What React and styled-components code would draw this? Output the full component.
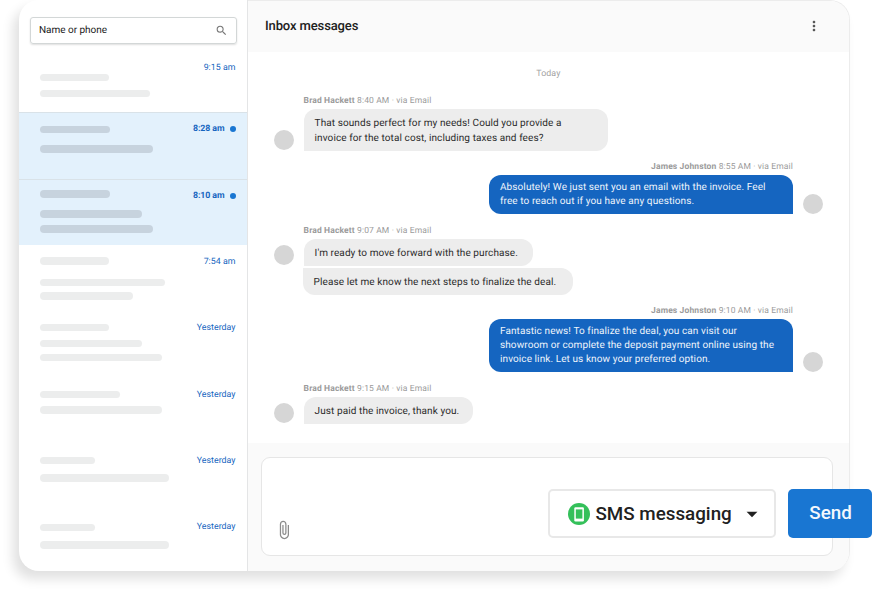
import React from 'react';
import styled, { createGlobalStyle, css } from 'styled-components';
import { MdAttachFile, MdMoreVert, MdSearch, MdArrowDropDown } from 'react-icons/md';

const blue = '#1565c0';
const buttonBlue = '#1976d2';
const panelGrey = '#fafafa';
const lineGrey = '#e4e5e6';

const GlobalStyle = createGlobalStyle`
  * {
    box-sizing: border-box;
  }

  body {
    margin: 0;
    background: #fff;
    overflow: hidden;
    font-family: Roboto, 'Liberation Sans', sans-serif;
    color: #212121;
    text-rendering: geometricPrecision;
  }
`;

const Page = styled.div`
  width: 873px;
  height: 590px;
  padding-left: 19px;
`;

const Card = styled.div`
  display: flex;
  width: 831px;
  height: 571px;
  border-radius: 20px;
  background: #fff;
  box-shadow: -6px 8px 12px rgba(0, 0, 0, 0.12);
`;

const Sidebar = styled.aside`
  display: flex;
  flex-direction: column;
  flex: none;
  width: 229px;
  border-right: 1px solid ${lineGrey};
`;

const SearchBox = styled.div`
  display: flex;
  align-items: center;
  justify-content: space-between;
  flex: none;
  height: 27px;
  margin: 17px 10px 1.8px 11px;
  padding: 0 8px 0 8px;
  border: 1px solid #d3d7d7;
  border-radius: 3px;
  box-shadow: 0 1px 2px rgba(0, 0, 0, 0.13);
  font-size: 10px;
  letter-spacing: -0.03px;

  svg {
    color: #777;
  }
`;

const Row = styled.div`
  display: flex;
  justify-content: space-between;
  flex: none;
  height: 66.4px;
  padding: 0 11.5px 0 21px;

  ${props => props.$unread && css`
    background: #e3f1fc;
    border-top: 1px solid #d9e2e8;
  `}
`;

const Bar = styled.div`
  width: ${props => props.$width}px;
  height: 7.4px;
  margin-top: ${props => props.$gap}px;
  border-radius: 4px;
  background: ${props => (props.$unread ? '#c7d3de' : '#eceded')};
`;

const Time = styled.div`
  display: flex;
  align-items: center;
  height: 12px;
  margin-top: ${props => props.$gap}px;
  font-size: 8.8px;
  font-weight: ${props => (props.$unread ? 700 : 400)};
  letter-spacing: ${props => (props.$unread ? -0.08 : 0.03)}px;
  color: ${blue};
`;

const Dot = styled.span`
  width: 6px;
  height: 6px;
  margin-left: 5px;
  border-radius: 50%;
  background: ${buttonBlue};
`;

const Main = styled.main`
  display: flex;
  flex-direction: column;
  flex: none;
  width: 602px;
  border: solid #ececec;
  border-width: 1px 1px 0 0;
  border-radius: 0 20px 20px 0;
`;

const Header = styled.header`
  display: flex;
  align-items: center;
  justify-content: space-between;
  height: 51px;
  padding: 0 27px 1px 17px;
  border-radius: 0 19px 0 0;
  background: ${panelGrey};

  svg {
    color: #555;
  }
`;

const Title = styled.h1`
  margin: 1px 0 0;
  font-size: 13px;
  font-weight: 500;
  letter-spacing: -0.12px;
`;

const Thread = styled.section`
  flex: 1;
  padding: 15px 26px 0 25.6px;
`;

const Day = styled.div`
  height: 12px;
  padding-top: 1px;
  font-size: 8.8px;
  line-height: 12px;
  letter-spacing: 0.1px;
  text-align: center;
  color: #a3a3a3;
`;

const Message = styled.div`
  display: flex;
  flex-direction: ${props => (props.$own ? 'row-reverse' : 'row')};
  align-items: flex-end;
  gap: 10px;
  margin-top: ${props => props.$gap}px;
`;

const Avatar = styled.div`
  flex: none;
  width: 20px;
  height: 20px;
  margin-bottom: ${props => props.$lift}px;
  border-radius: 50%;
  background: #d6d6d6;
`;

const Stack = styled.div`
  display: flex;
  flex-direction: column;
  align-items: ${props => (props.$own ? 'flex-end' : 'flex-start')};
`;

const Meta = styled.div`
  height: 12px;
  margin-bottom: 3px;
  padding-top: 1px;
  font-size: 8.5px;
  line-height: 12px;
  letter-spacing: 0.13px;
  white-space: nowrap;
  color: #9b9b9b;
`;

const Bubble = styled.div`
  width: ${props => props.$width}px;
  padding: ${props => props.$pad};
  border-radius: ${props => props.$radius};
  background: ${props => (props.$own ? blue : '#ededed')};
  color: ${props => (props.$own ? '#eef4fb' : '#2b2b2b')};
  font-size: 10px;
  line-height: ${props => props.$leading}px;
  letter-spacing: 0.09px;
  white-space: pre;

  & + & {
    margin: 2px 0 0 -1px;
  }
`;

const ComposerPanel = styled.footer`
  flex: none;
  height: 128px;
  padding: 14px 0 0 13px;
  border-radius: 0 0 19px 0;
  background: ${panelGrey};
`;

const Composer = styled.div`
  display: flex;
  align-items: flex-end;
  width: 572px;
  height: 99px;
  padding: 0 0 17px 12px;
  border: 1px solid #e6e6e6;
  border-radius: 9px;
  background: #fff;
`;

const ClipIcon = styled(MdAttachFile)`
  margin-bottom: -2px;
  color: #8c8c8c;
`;

const Channel = styled.button`
  display: flex;
  align-items: center;
  flex: none;
  width: 228px;
  height: 49px;
  margin-left: auto;
  padding: 0 0 0 18px;
  border: 2px solid #e8e8e8;
  border-radius: 5px;
  background: #fff;
  font: 500 18.8px Roboto, sans-serif;
  color: #212121;
`;

const ChannelName = styled.span`
  width: 143.5px;
  margin-left: 5.5px;
  text-align: left;
  white-space: nowrap;
`;

// The send button hangs over the right edge of the card.
const Send = styled.button`
  flex: none;
  width: 84px;
  height: 49px;
  margin: 0 -40px 0 12px;
  padding: 0 0 2px 1px;
  border: 0;
  border-radius: 5px;
  background: ${buttonBlue};
  font: 500 18.8px Roboto, sans-serif;
  color: #f4f8fd;
`;

const PhoneIcon = () => (
  <svg width="22" height="22" viewBox="0 0 22 22">
    <circle cx="11" cy="11" r="11" fill="#34c05a" />
    <rect x="6.3" y="4.2" width="9.6" height="14.2" rx="1.2" fill="#fff" />
    <rect x="7.8" y="6.4" width="6.6" height="9.2" fill="#34c05a" />
  </svg>
);

// bars are [space above, width]
const conversations = [
  { time: '9:15 am', timeGap: 16.4, bars: [[28, 69], [8.8, 110]] },
  { time: '8:28 am', timeGap: 10, unread: true, bars: [[12.8, 70], [12, 113]] },
  { time: '8:10 am', timeGap: 10, unread: true, bars: [[10.6, 70], [12.6, 102], [7.6, 113]] },
  { time: '7:54 am', timeGap: 11, bars: [[12.2, 69], [14, 125], [6.3, 93]] },
  { time: 'Yesterday', timeGap: 10.6, bars: [[12.2, 69], [9, 102], [6.2, 122]] },
  { time: 'Yesterday', timeGap: 10.8, bars: [[12.8, 80], [8.2, 122]] },
  { time: 'Yesterday', timeGap: 10.8, bars: [[12.7, 55], [10, 129]] },
  { time: 'Yesterday', timeGap: 10.4, bars: [[13.4, 55], [10, 129]] }
];

const thread = [
  {
    name: 'Brad Hackett',
    time: '8:40 AM',
    gap: 15,
    lift: 1,
    bubbles: [
      {
        width: 304,
        pad: '7px 11px 5px',
        leading: 15,
        radius: '12px 12px 12px 0',
        text: 'That sounds perfect for my needs! Could you provide a\ninvoice for the total cost, including taxes and fees?'
      }
    ]
  },
  {
    name: 'James Johnston',
    time: '8:55 AM',
    own: true,
    gap: 9,
    lift: 0,
    bubbles: [
      {
        width: 304,
        pad: '6px 11px 5px',
        leading: 14,
        radius: '12px 12px 0 12px',
        text: 'Absolutely! We just sent you an email with the invoice. Feel\nfree to reach out if you have any questions.'
      }
    ]
  },
  {
    name: 'Brad Hackett',
    time: '9:07 AM',
    gap: 10,
    lift: 30,
    bubbles: [
      {
        width: 229,
        pad: '7px 11px 5px',
        leading: 15,
        radius: '12px 12px 12px 0',
        text: 'I\'m ready to move forward with the purchase.'
      },
      {
        width: 270,
        pad: '7px 11px 5px',
        leading: 15,
        radius: '0 12px 12px 12px',
        text: 'Please let me know the next steps to finalize the deal.'
      }
    ]
  },
  {
    name: 'James Johnston',
    time: '9:10 AM',
    own: true,
    gap: 9,
    lift: 0,
    bubbles: [
      {
        width: 304,
        pad: '6px 11px 5px',
        leading: 14,
        radius: '12px 12px 0 12px',
        text: 'Fantastic news! To finalize the deal, you can visit our\nshowroom or complete the deposit payment online using the\ninvoice link. Let us know your preferred option.'
      }
    ]
  },
  {
    name: 'Brad Hackett',
    time: '9:15 AM',
    gap: 10,
    lift: 1,
    bubbles: [
      {
        width: 169,
        pad: '7px 11px 5px',
        leading: 15,
        radius: '12px 12px 12px 0',
        text: 'Just paid the invoice, thank you.'
      }
    ]
  }
];

const ConversationRow = ({ time, timeGap, unread, bars }) => (
  <Row $unread={unread}>
    <div>
      {bars.map(([gap, width], i) => (
        <Bar key={i} $gap={gap} $width={width} $unread={unread} />
      ))}
    </div>
    <Time $gap={timeGap} $unread={unread}>
      {time}
      {unread && <Dot />}
    </Time>
  </Row>
);

const ThreadMessage = ({ name, time, own, gap, lift, bubbles }) => (
  <Message $own={own} $gap={gap}>
    <Avatar $lift={lift} />
    <Stack $own={own}>
      <Meta>
        <b>{name}</b> {time} · via Email
      </Meta>
      {bubbles.map(b => (
        <Bubble
          key={b.text}
          $own={own}
          $width={b.width}
          $pad={b.pad}
          $leading={b.leading}
          $radius={b.radius}
        >
          {b.text}
        </Bubble>
      ))}
    </Stack>
  </Message>
);

const App = () => (
  <Page>
    <GlobalStyle />
    <Card>
      <Sidebar>
        <SearchBox>
          Name or phone
          <MdSearch size={13} />
        </SearchBox>
        {conversations.map((c, i) => <ConversationRow key={i} {...c} />)}
      </Sidebar>
      <Main>
        <Header>
          <Title>Inbox messages</Title>
          <MdMoreVert size={16} />
        </Header>
        <Thread>
          <Day>Today</Day>
          {thread.map((m, i) => <ThreadMessage key={i} {...m} />)}
        </Thread>
        <ComposerPanel>
          <Composer>
            <ClipIcon size={20} />
            <Channel>
              <PhoneIcon />
              <ChannelName>SMS messaging</ChannelName>
              <MdArrowDropDown size={26} />
            </Channel>
            <Send>Send</Send>
          </Composer>
        </ComposerPanel>
      </Main>
    </Card>
  </Page>
);

export default App;
